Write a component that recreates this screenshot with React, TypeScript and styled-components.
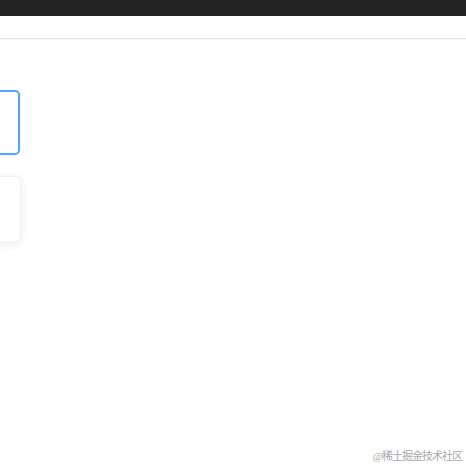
import React from 'react'
import styled, { createGlobalStyle } from 'styled-components'

const GlobalStyle = createGlobalStyle`
  html, body {
    margin: 0;
    padding: 0;
    background: #ffffff;
    font-family: "Noto Sans", "Noto Sans CJK SC", sans-serif;
  }
`

const App = () => {
  return (
    <Page>
      <GlobalStyle />
      <TopBar />
      <Header />
      <Content>
        <Track>
          <InputCard active>
            <Placeholder>请输入内容</Placeholder>
          </InputCard>
          <InputCard />
        </Track>
      </Content>
      <Watermark>@稀土掘金技术社区</Watermark>
    </Page>
  )
}

export default App

const Page = styled.div`
  position: relative;
  width: 100%;
  height: 466px;
  background: #ffffff;
  overflow: hidden;
`

const TopBar = styled.div`
  height: 16px;
  background-color: #222222;
`

const Header = styled.div`
  height: 22px;
  border-bottom: 1px solid #e8e8e8;
  box-shadow: 0 1px 1px rgba(0, 0, 0, 0.03);
`

const Content = styled.div`
  display: flex;
  padding-top: 51px;
`

const Track = styled.div`
  width: 21px;
  padding-right: 10px;
  padding-bottom: 20px;
  display: flex;
  flex-direction: column;
  align-items: flex-end;
  gap: 21px;
  overflow: hidden;
`

const InputCard = styled.div<{ active?: boolean }>`
  flex-shrink: 0;
  box-sizing: border-box;
  width: 240px;
  height: ${p => (p.active ? '65px' : '66px')};
  margin-right: ${p => (p.active ? '1px' : '0')};
  display: flex;
  align-items: center;
  justify-content: flex-end;
  padding-right: 18px;
  border-radius: 5px;
  background: #ffffff;
  border: ${p => (p.active ? '2px solid #55a6ff' : '1px solid #f2f2f2')};
  box-shadow: ${p => (p.active ? '0 0 2px rgba(85, 166, 255, 0.35)' : '0 2px 10px rgba(0, 0, 0, 0.08)')};
`

const Placeholder = styled.span`
  font-size: 13px;
  color: #e2e2e2;
`

const Watermark = styled.div`
  position: absolute;
  right: 4px;
  bottom: 3px;
  font-family: "Liberation Serif", "Noto Sans CJK SC", serif;
  font-size: 11px;
  color: #a8a8a8;
  letter-spacing: -1px;
`
